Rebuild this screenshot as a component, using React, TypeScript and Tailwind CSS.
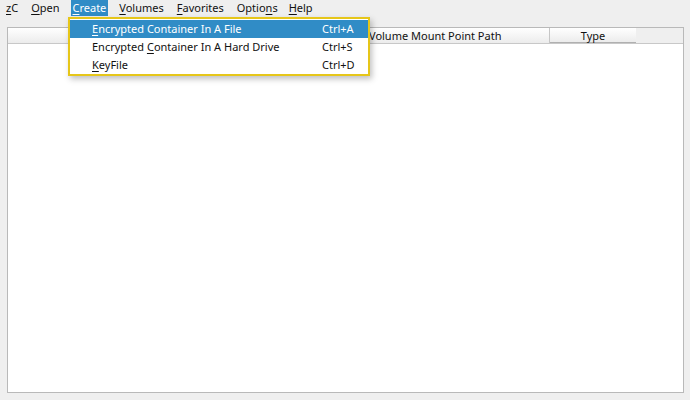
import React from "react";

const menus: { label: string; key: number }[] = [
  { label: "zC", key: 0 },
  { label: "Open", key: 0 },
  { label: "Create", key: 0 },
  { label: "Volumes", key: 0 },
  { label: "Favorites", key: 0 },
  { label: "Options", key: 5 },
  { label: "Help", key: 0 },
];

const items = [
  { label: "Encrypted Container In A File", key: 0, shortcut: "Ctrl+A", active: true },
  { label: "Encrypted Container In A Hard Drive", key: 10, shortcut: "Ctrl+S", active: false },
  { label: "KeyFile", key: 0, shortcut: "Ctrl+D", active: false },
];

const Mnemonic = ({ text, at }: { text: string; at: number }) => (
  <>
    {text.slice(0, at)}
    <span className="underline underline-offset-2">{text[at]}</span>
    {text.slice(at + 1)}
  </>
);

function App() {
  return (
    <div
      className="relative w-[690px] h-[400px] bg-[#efefef] text-[11px] text-[#111] overflow-hidden"
      style={{ fontFamily: '"Noto Sans", "DejaVu Sans", sans-serif' }}
    >
      {/* menu bar */}
      <div className="flex h-[17px] items-start gap-[9px] pl-[4px]">
        {menus.map((m) => (
          <div
            key={m.label}
            className={`h-[16px] px-[2px] leading-[16px] ${
              m.label === "Create" ? "bg-[#308cc6] text-white" : ""
            } ${m.label === "Help" ? "-ml-[2px]" : ""}`}
          >
            <Mnemonic text={m.label} at={m.key} />
          </div>
        ))}
      </div>

      {/* table */}
      <div className="ml-[7px] mr-[6px] mt-[10px] h-[366px] border border-[#b9b9b9] bg-white flex flex-col">
        <div className="flex h-[16px] bg-[#efefef] border-b border-[#c8c8c8]">
          <div className="w-[312px] bg-gradient-to-b from-white to-[#ececec] border-r border-[#c6c6c6]" />
          <div className="w-[230px] pl-[49px] leading-[15px] bg-gradient-to-b from-white to-[#ececec] border-r border-[#c6c6c6]">
            Volume Mount Point Path
          </div>
          <div className="w-[86px] text-center leading-[15px] bg-gradient-to-b from-white to-[#ececec] border-b border-[#b0b0b0]">
            Type
          </div>
          <div className="flex-1" />
        </div>
        <div className="flex-1" />
      </div>

      {/* dropdown menu */}
      <div className="absolute left-[68px] top-[17px] w-[302px] h-[59px] bg-white border-2 border-[#e6c619] shadow-[2px_3px_6px_rgba(0,0,0,0.25)] flex flex-col pt-px">
        {items.map((it) => (
          <div
            key={it.label}
            className={`flex h-[18px] items-center pl-[22px] pr-[10px] ${
              it.active ? "bg-[#308cc6] text-white" : ""
            }`}
          >
            <span className="flex-1">
              <Mnemonic text={it.label} at={it.key} />
            </span>
            <span className="w-[36px]">{it.shortcut}</span>
          </div>
        ))}
      </div>
    </div>
  );
}

export default App;
